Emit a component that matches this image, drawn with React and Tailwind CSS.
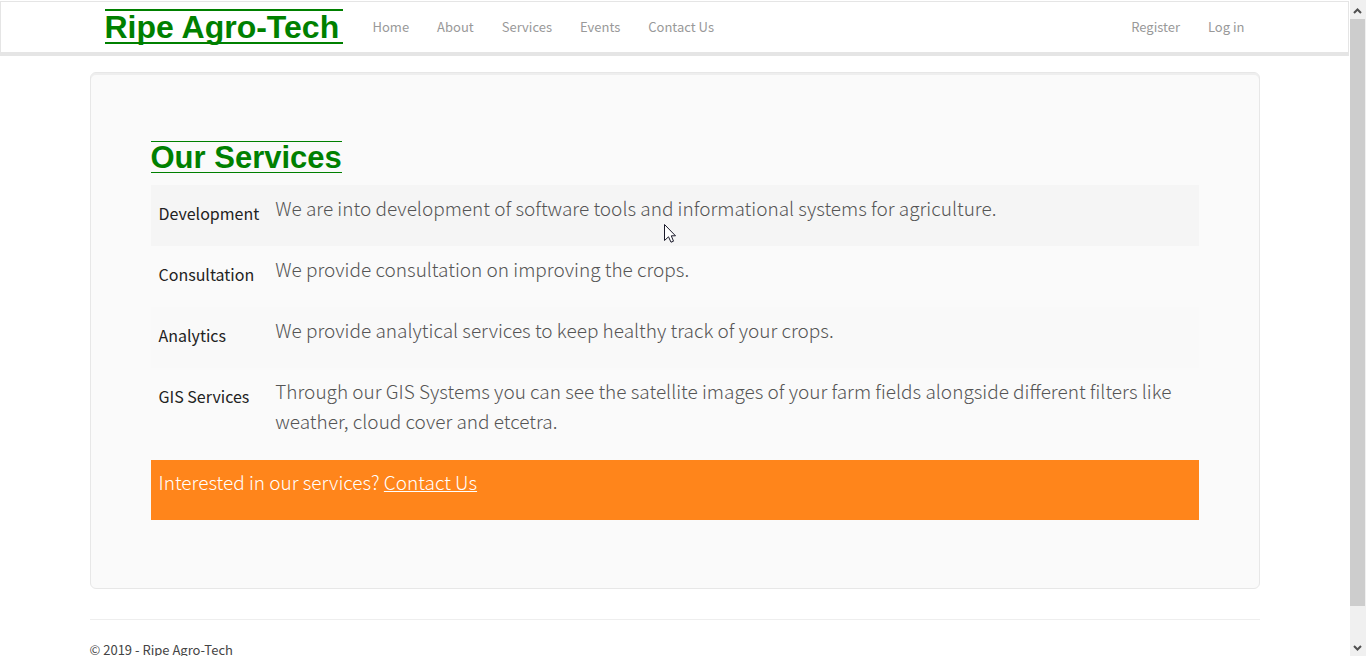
const navLinks = ['Home', 'About', 'Services', 'Events', 'Contact Us'];
const accountLinks = ['Register', 'Log in'];

const services = [
  {
    name: 'Development',
    text: 'We are into development of software tools and informational systems for agriculture.',
    row: 'bg-[#f5f5f5]',
  },
  {
    name: 'Consultation',
    text: 'We provide consultation on improving the crops.',
    row: '',
  },
  {
    name: 'Analytics',
    text: 'We provide analytical services to keep healthy track of your crops.',
    row: 'bg-[#f9f9f9]',
  },
  {
    name: 'GIS Services',
    text: 'Through our GIS Systems you can see the satellite images of your farm fields alongside different filters like weather, cloud cover and etcetra.',
    row: '',
  },
];

function NavLink({ children }) {
  return (
    <a href="#" className="px-[14px] text-[13px] leading-5 text-[#999999] hover:text-[#333333]">
      {children}
    </a>
  );
}

function Header() {
  return (
    <header className="mt-px border border-b-4 border-[#e5e5e5] bg-white">
      <div className="mx-auto flex h-[50px] max-w-[1170px] items-center justify-between pb-px">
        <div className="flex items-center">
          <a
            href="#"
            className="mr-4 ml-[15px] min-w-[238px] border-y-2 border-[#008000] pt-0.5 font-['Arial_Rounded_MT_Bold','Liberation_Sans',sans-serif] text-[32px] leading-[29px] font-bold whitespace-nowrap text-[#008000]"
          >
            Ripe Agro-Tech
          </a>
          <nav className="flex" aria-label="Main">
            {navLinks.map((label) => (
              <NavLink key={label}>{label}</NavLink>
            ))}
          </nav>
        </div>
        <nav className="flex pr-px" aria-label="Account">
          {accountLinks.map((label) => (
            <NavLink key={label}>{label}</NavLink>
          ))}
        </nav>
      </div>
    </header>
  );
}

function ServicesPanel() {
  return (
    <section className="rounded-md border border-[#e7e7e7] bg-[#fafafa] px-[60px] pt-[68px] pb-[68px] shadow-[inset_0_2px_0_#eeeeee]">
      <h1 className="mb-3 w-fit border-y border-[#008000] pt-0.5 font-['Arial_Rounded_MT_Bold','Liberation_Sans',sans-serif] text-[31px] leading-[28px] font-bold text-[#008000]">
        Our Services
      </h1>
      <table className="w-full border-collapse text-left">
        <tbody>
          {services.map((service) => (
            <tr key={service.name} className={service.row}>
              <th scope="row" className="px-2 pt-[18px] align-top text-[16px] leading-5 font-normal whitespace-nowrap text-[#222222]">
                {service.name}
              </th>
              <td className="w-full px-2 pt-2 pb-[23px] align-top text-[19px] leading-[30px] font-light text-[#555555]">
                {service.text}
              </td>
            </tr>
          ))}
        </tbody>
      </table>
      <p className="mt-px bg-[#ff851b] px-2 pt-[7px] pb-[23px] text-[19px] leading-[30px] font-light text-white">
        Interested in our services?{' '}
        <a href="#" className="underline">
          Contact Us
        </a>
      </p>
    </section>
  );
}

function Scrollbar() {
  return (
    <div className="flex w-4 shrink-0 flex-col items-center bg-[#f0f0f0]" aria-hidden="true">
      <svg className="h-[19px] w-4 shrink-0" viewBox="0 0 16 19" fill="none" stroke="#505050" strokeWidth="2">
        <path d="M4 13 L7.500 9.500 L11 13" />
      </svg>
      <div className="w-full grow-[587] pr-px">
        <div className="h-full bg-[#cdcdcd]" />
      </div>
      <div className="grow-[33]" />
      <svg className="h-[17px] w-4 shrink-0" viewBox="0 0 16 17" fill="none" stroke="#505050" strokeWidth="2">
        <path d="M4 7 L7.500 10.500 L11 7" />
      </svg>
    </div>
  );
}

function Pointer() {
  return (
    <svg className="absolute top-[224px] left-[664px] h-5 w-3" viewBox="0 0 12 20" aria-hidden="true">
      <path
        d="M0.500 0.500 V16.500 L4.500 12.800 L7 18.200 L9.500 17.200 L7.300 11.800 H11.500 Z"
        fill="#ffffff"
        stroke="#1a1a2a"
        strokeWidth="1"
      />
    </svg>
  );
}

export default function App() {
  return (
    <div className="relative flex h-screen overflow-hidden bg-white font-['Source_Sans_Pro','Noto_Sans_CJK_SC',sans-serif]">
      <div className="min-w-0 grow overflow-hidden bg-white pr-px">
        <Header />
        <main className="mx-auto mt-4 max-w-[1170px]">
          <ServicesPanel />
          <footer className="mt-[30px] border-t border-[#eeeeee] pt-5 text-[13px] leading-5 text-[#444444]">
            <p>© 2019 - Ripe Agro-Tech</p>
          </footer>
        </main>
      </div>
      <Scrollbar />
      <Pointer />
    </div>
  );
}
